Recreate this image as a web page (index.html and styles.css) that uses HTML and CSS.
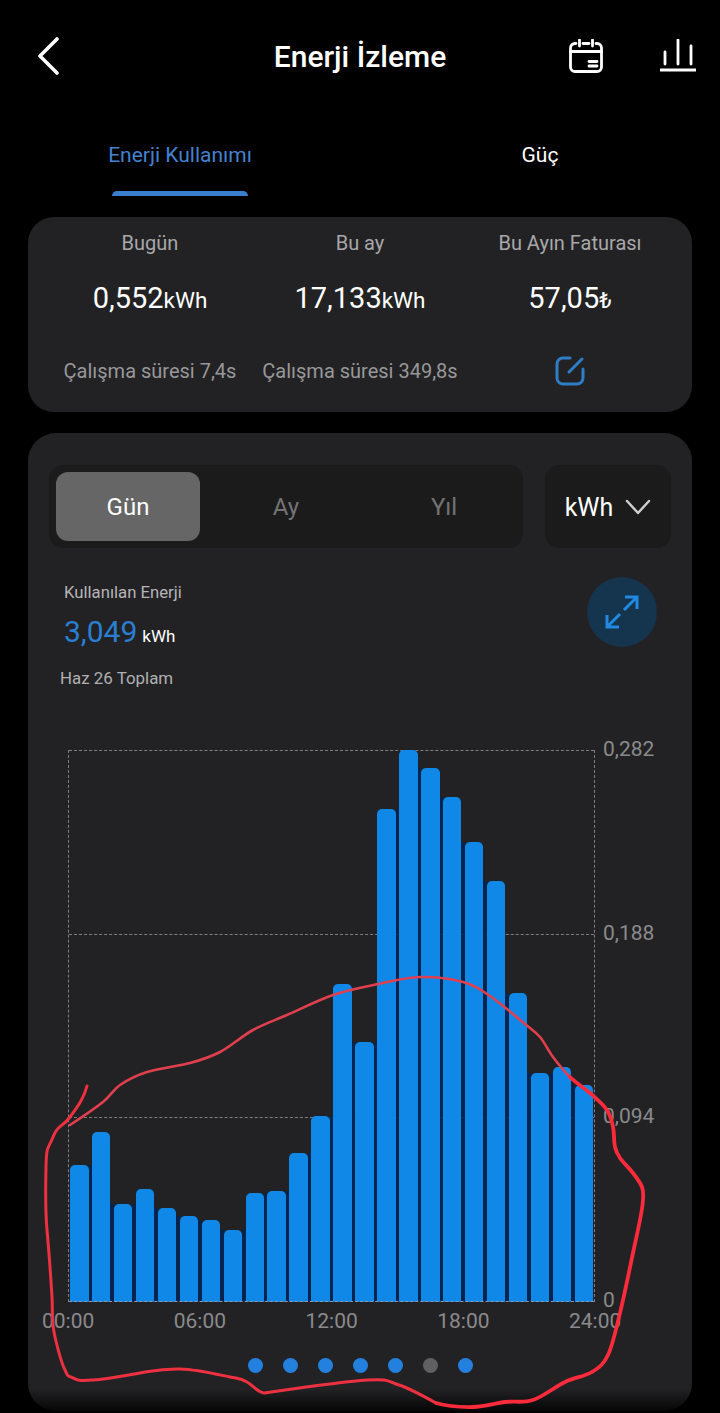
FILE: index.html
```html
<!doctype html>
<html lang="tr">
  <head>
    <meta charset="UTF-8">
    <meta name="viewport" content="width=device-width, initial-scale=1.0">
    <title>Enerji İzleme</title>
    <link rel="stylesheet" href="styles.css">
  </head>
  <body>
    <div class="header">
      <svg class="back-icon" width="24" height="38" viewBox="0 0 24 38" fill="none">
        <path d="M20 2 L3 19 L20 36" />
      </svg>
      <h1>Enerji İzleme</h1>
      <div class="header-actions">
        <svg class="line-icon" width="34" height="34" viewBox="0 0 34 34" fill="none">
          <path d="M7 4.5H6A4.5 4.5 0 0 0 1.5 9V28A4.5 4.5 0 0 0 6 32.5H28A4.5 4.5 0 0 0 32.5 28V9A4.5 4.5 0 0 0 28 4.5H27" />
          <path d="M14 4.5H20M10.5 1V7M23.5 1V7M1.5 12.5H32.5M20 22.5H28M20 27H28" />
        </svg>
        <svg class="line-icon" width="36" height="34" viewBox="0 0 36 34" fill="none">
          <path d="M5 13V25M18 1V25M31 7V25M0 31H36" />
        </svg>
      </div>
    </div>

    <div class="tabs">
      <div class="tab active">Enerji Kullanımı</div>
      <div class="tab">Güç</div>
    </div>

    <div class="card summary">
      <div class="stat">
        <div class="stat-label">Bugün</div>
        <div class="stat-value">0,552<small>kWh</small></div>
        <div class="stat-sub">Çalışma süresi 7,4s</div>
      </div>
      <div class="stat">
        <div class="stat-label">Bu ay</div>
        <div class="stat-value">17,133<small>kWh</small></div>
        <div class="stat-sub">Çalışma süresi 349,8s</div>
      </div>
      <div class="stat">
        <div class="stat-label">Bu Ayın Faturası</div>
        <div class="stat-value">57,05<small>₺</small></div>
        <div class="stat-sub">
          <svg class="edit-icon" width="30" height="30" viewBox="0 0 30 30" fill="none">
            <path d="M15 2H8A6 6 0 0 0 2 8V22A6 6 0 0 0 8 28H22A6 6 0 0 0 28 22V13M14 16L27 3" />
          </svg>
        </div>
      </div>
    </div>

    <div class="card usage">
      <div class="controls">
        <div class="segments">
          <div class="segment active">Gün</div>
          <div class="segment">Ay</div>
          <div class="segment">Yıl</div>
        </div>
        <div class="unit-select">
          kWh
          <svg class="chevron" width="26" height="16" viewBox="0 0 26 16" fill="none">
            <path d="M2 2L13 14L24 2" />
          </svg>
        </div>
      </div>

      <div class="info">
        <div class="info-text">
          <div class="info-label">Kullanılan Enerji</div>
          <div class="info-value">3,049<small>kWh</small></div>
          <div class="info-date">Haz 26 Toplam</div>
        </div>
        <div class="expand">
          <svg width="34" height="34" viewBox="0 0 34 34" fill="none">
            <path d="M20 2H32V14M32 2L19 15M2 20V32H14M2 32L15 19" />
          </svg>
        </div>
      </div>

      <div class="chart">
        <div class="plot">
          <div class="grid-lines">
            <span></span><span></span><span></span><span></span>
          </div>
          <div class="bars">
            <i class="bar" style="height:137px"></i><i class="gap" style="height:137px"></i>
            <i class="bar" style="height:170px"></i><i class="gap" style="height:98px"></i>
            <i class="bar" style="height:98px"></i><i class="gap" style="height:98px"></i>
            <i class="bar" style="height:113px"></i><i class="gap" style="height:94px"></i>
            <i class="bar" style="height:94px"></i><i class="gap" style="height:86px"></i>
            <i class="bar" style="height:86px"></i><i class="gap" style="height:82px"></i>
            <i class="bar" style="height:82px"></i><i class="gap" style="height:72px"></i>
            <i class="bar" style="height:72px"></i><i class="gap" style="height:72px"></i>
            <i class="bar" style="height:109px"></i><i class="gap" style="height:109px"></i>
            <i class="bar" style="height:111px"></i><i class="gap" style="height:111px"></i>
            <i class="bar" style="height:149px"></i><i class="gap" style="height:149px"></i>
            <i class="bar" style="height:186px"></i><i class="gap" style="height:186px"></i>
            <i class="bar" style="height:318px"></i><i class="gap" style="height:260px"></i>
            <i class="bar" style="height:260px"></i><i class="gap" style="height:260px"></i>
            <i class="bar" style="height:493px"></i><i class="gap" style="height:493px"></i>
            <i class="bar" style="height:552px"></i><i class="gap" style="height:534px"></i>
            <i class="bar" style="height:534px"></i><i class="gap" style="height:505px"></i>
            <i class="bar" style="height:505px"></i><i class="gap" style="height:460px"></i>
            <i class="bar" style="height:460px"></i><i class="gap" style="height:421px"></i>
            <i class="bar" style="height:421px"></i><i class="gap" style="height:309px"></i>
            <i class="bar" style="height:309px"></i><i class="gap" style="height:229px"></i>
            <i class="bar" style="height:229px"></i><i class="gap" style="height:229px"></i>
            <i class="bar" style="height:235px"></i><i class="gap" style="height:217px"></i>
            <i class="bar" style="height:217px"></i>
          </div>
        </div>
        <div class="y-axis">
          <span>0,282</span>
          <span>0,188</span>
          <span>0,094</span>
          <span>0</span>
        </div>
      </div>

      <div class="x-axis">
        <span>00:00</span>
        <span>06:00</span>
        <span>12:00</span>
        <span>18:00</span>
        <span>24:00</span>
      </div>

      <div class="dots">
        <span></span><span></span><span></span><span></span><span></span>
        <span class="off"></span><span></span>
      </div>
    </div>

    <!-- hand drawn marker over the whole screenshot -->
    <svg class="scribble" width="720" height="1413" viewBox="0 0 720 1413" fill="none">
      <path class="thin" d="M70 1125S94.700 1108.700 103 1102S112.700 1090 120 1085S135.300 1075.700 147 1072S177.800 1066.300 190 1063S209.500 1057.500 220 1052S241.800 1036.200 253 1030S273.700 1020.800 287 1015S317.800 1000.200 333 995S363.500 987 378 984S405.800 977.300 420 977S451.300 978.800 463 982S479.700 989 490 996S516.700 1017.200 525 1024S535.300 1031.500 540 1037S548 1050.300 553 1057S563.800 1071 570 1077" />
      <path class="thick" d="M570 1077C576 1083 583.800 1087.500 590 1093S603.200 1104.300 607 1110S611.700 1120.800 613 1127S613.800 1141.800 615 1147S617 1153.700 620 1158S629.300 1168.200 633 1173S640.300 1182.500 642 1187S643.300 1194.500 643 1200S641.700 1211.200 640 1220S636.300 1237.500 633 1253S624.200 1296 620 1313S612.700 1345.200 608 1355S599.200 1367.500 592 1372S574.800 1377.300 565 1382S543 1396.700 533 1400S515 1400.800 505 1402S484.500 1406.800 473 1407S448.300 1406.700 436 1403" />
      <path class="mid" d="M436 1403S410.500 1388.800 399 1385S389.500 1378.700 367 1380S285 1390 264 1393C258 1393 254 1386 247 1382S240 1379 230 1377S198 1369.500 180 1369S158 1370 140 1373S108 1379 93 1380S80 1381 73 1378S68 1376 65 1370S59 1354 55 1337S53 1313 52 1297S49 1252 47 1230S45.500 1190 46 1167S48 1150 53 1137S62 1128 70 1117S84 1098 87 1086" />
    </svg>
  </body>
</html>
```

FILE: styles.css
```css
* {
  margin: 0;
  padding: 0;
  box-sizing: border-box;
}

body {
  position: relative;
  width: 720px;
  height: 1413px;
  padding: 0 28px;
  overflow: hidden;
  font-family: Roboto, "Noto Sans", sans-serif;
  color: #ffffff;
  background: #000000;
}

.header {
  display: grid;
  grid-template-columns: 1fr auto 1fr;
  align-items: center;
  height: 112px;
}

.back-icon {
  margin-left: 9px;
}

.back-icon path {
  stroke: #ffffff;
  stroke-width: 3.6;
  stroke-linecap: round;
  stroke-linejoin: round;
}

h1 {
  font-size: 30px;
  font-weight: 500;
}

.header-actions {
  display: flex;
  justify-content: flex-end;
  gap: 57px;
  margin-right: -4px;
}

.line-icon path {
  stroke: #ffffff;
  stroke-width: 2.8;
  stroke-linecap: round;
}

.tabs {
  display: grid;
  grid-template-columns: 1fr 1fr;
  margin: 0 -28px 21px;
}

.tab {
  height: 84px;
  padding-top: 31px;
  font-size: 21px;
  line-height: 24px;
  text-align: center;
}

.tab.active {
  color: #4382cf;
}

.tab.active::after {
  content: "";
  display: block;
  width: 136px;
  height: 5px;
  margin: 24px auto 0;
  background: #3a7fcf;
  border-radius: 5px 5px 0 0;
}

.card {
  background: #222224;
  border-radius: 26px;
}

.summary {
  display: grid;
  grid-template-columns: repeat(3, 210px);
  padding: 14px 17px 26px;
  margin-bottom: 21px;
}

.stat {
  text-align: center;
}

.stat-label {
  font-size: 20px;
  line-height: 24px;
  color: #a8a8aa;
}

.stat-value {
  margin-top: 25px;
  font-size: 29px;
  line-height: 36px;
}

.stat-value small {
  font-size: 22.5px;
  line-height: 1;
}

.stat-sub {
  height: 30px;
  margin-top: 40px;
  font-size: 20px;
  line-height: 30px;
  color: #98989a;
  white-space: nowrap;
}

.edit-icon path {
  stroke: #2f7dc6;
  stroke-width: 3;
  stroke-linecap: round;
}

.usage {
  padding: 32px 21px 38px;
  border-radius: 28px;
  background: linear-gradient(to bottom, #222224 calc(100% - 22px), #060606 100%);
}

.controls {
  display: flex;
  gap: 22px;
}

.segments {
  display: grid;
  grid-template-columns: repeat(3, 158px);
  height: 83px;
  background: #1b1b1c;
  border-radius: 14px;
}

.segment {
  display: flex;
  align-items: center;
  justify-content: center;
  margin: 7px;
  padding-top: 1px;
  font-size: 24px;
  color: #737375;
  border-radius: 12px;
}

.segment.active {
  color: #ffffff;
  background: #666667;
}

.unit-select {
  display: flex;
  align-items: center;
  justify-content: center;
  gap: 12px;
  width: 126px;
  padding-top: 1px;
  font-size: 25px;
  background: #1b1b1c;
  border-radius: 14px;
}

.chevron path {
  stroke: #d0d0d2;
  stroke-width: 2.4;
  stroke-linecap: round;
  stroke-linejoin: round;
}

.info {
  display: flex;
  justify-content: space-between;
  height: 112px;
  padding: 0 14px 0 15px;
  margin-top: 29px;
}

.info-text {
  padding-top: 5px;
}

.info-label {
  font-size: 16.7px;
  line-height: 22px;
  color: #b5b5b7;
}

.info-value {
  margin-top: 8px;
  font-size: 30px;
  line-height: 40px;
  color: #2a7fd2;
}

.info-value small {
  margin-left: 5px;
  font-size: 17px;
  line-height: 1;
  color: #ffffff;
}

.info-date {
  margin: 15px 0 0 -4px;
  font-size: 16.9px;
  line-height: 22px;
  color: #b0b0b2;
}

.expand {
  display: flex;
  align-items: center;
  justify-content: center;
  width: 70px;
  height: 70px;
  background: #15344e;
  border-radius: 50%;
}

.expand path {
  stroke: #2288e0;
  stroke-width: 3;
}

.chart {
  display: flex;
  margin: 61px 0 0 19px;
}

.plot {
  position: relative;
  width: 527px;
  height: 552px;
  border-left: 1px dashed #7f7f82;
  border-right: 1px dashed #7f7f82;
}

.plot::after {
  content: "";
  position: absolute;
  left: 0;
  right: 0;
  bottom: 0;
  border-top: 1px dashed #8f9bab;
}

.grid-lines {
  display: flex;
  flex-direction: column;
  justify-content: space-between;
  height: 100%;
}

.grid-lines span {
  border-top: 1px dashed #7f7f82;
}

.bars {
  position: absolute;
  left: 1px;
  bottom: 0;
  display: flex;
  align-items: flex-end;
}

.bar {
  flex: none;
  width: 18.5px;
  background: #0f88e8;
  border-radius: 5px 5px 0 0;
}

.gap {
  flex: none;
  width: 3.45px;
  background: rgba(0, 36, 84, 0.88);
}

.y-axis {
  display: flex;
  flex-direction: column;
  justify-content: space-between;
  height: 571px;
  margin: -11px 0 0 8px;
  font-size: 21px;
  line-height: 20px;
  color: #8a8a8c;
}

.x-axis {
  display: flex;
  justify-content: space-between;
  width: 579px;
  margin: 1px 0 0 -7px;
  font-size: 21px;
  line-height: 20px;
  color: #8a8a8c;
}

.x-axis span {
  width: 52px;
  text-align: center;
}

.dots {
  display: flex;
  justify-content: center;
  gap: 20px;
  margin-top: 27px;
}

.dots span {
  width: 15px;
  height: 15px;
  background: #2480de;
  border-radius: 50%;
}

.dots .off {
  background: #606062;
}

.scribble {
  position: absolute;
  top: 0;
  left: 0;
  pointer-events: none;
}

.scribble path {
  stroke-linecap: round;
  stroke-linejoin: round;
}

.thin {
  stroke: #e0404e;
  stroke-width: 2.6;
}

.thick {
  stroke: #fb2b3c;
  stroke-width: 3.8;
}

.mid {
  stroke: #ee3140;
  stroke-width: 3;
}
```
